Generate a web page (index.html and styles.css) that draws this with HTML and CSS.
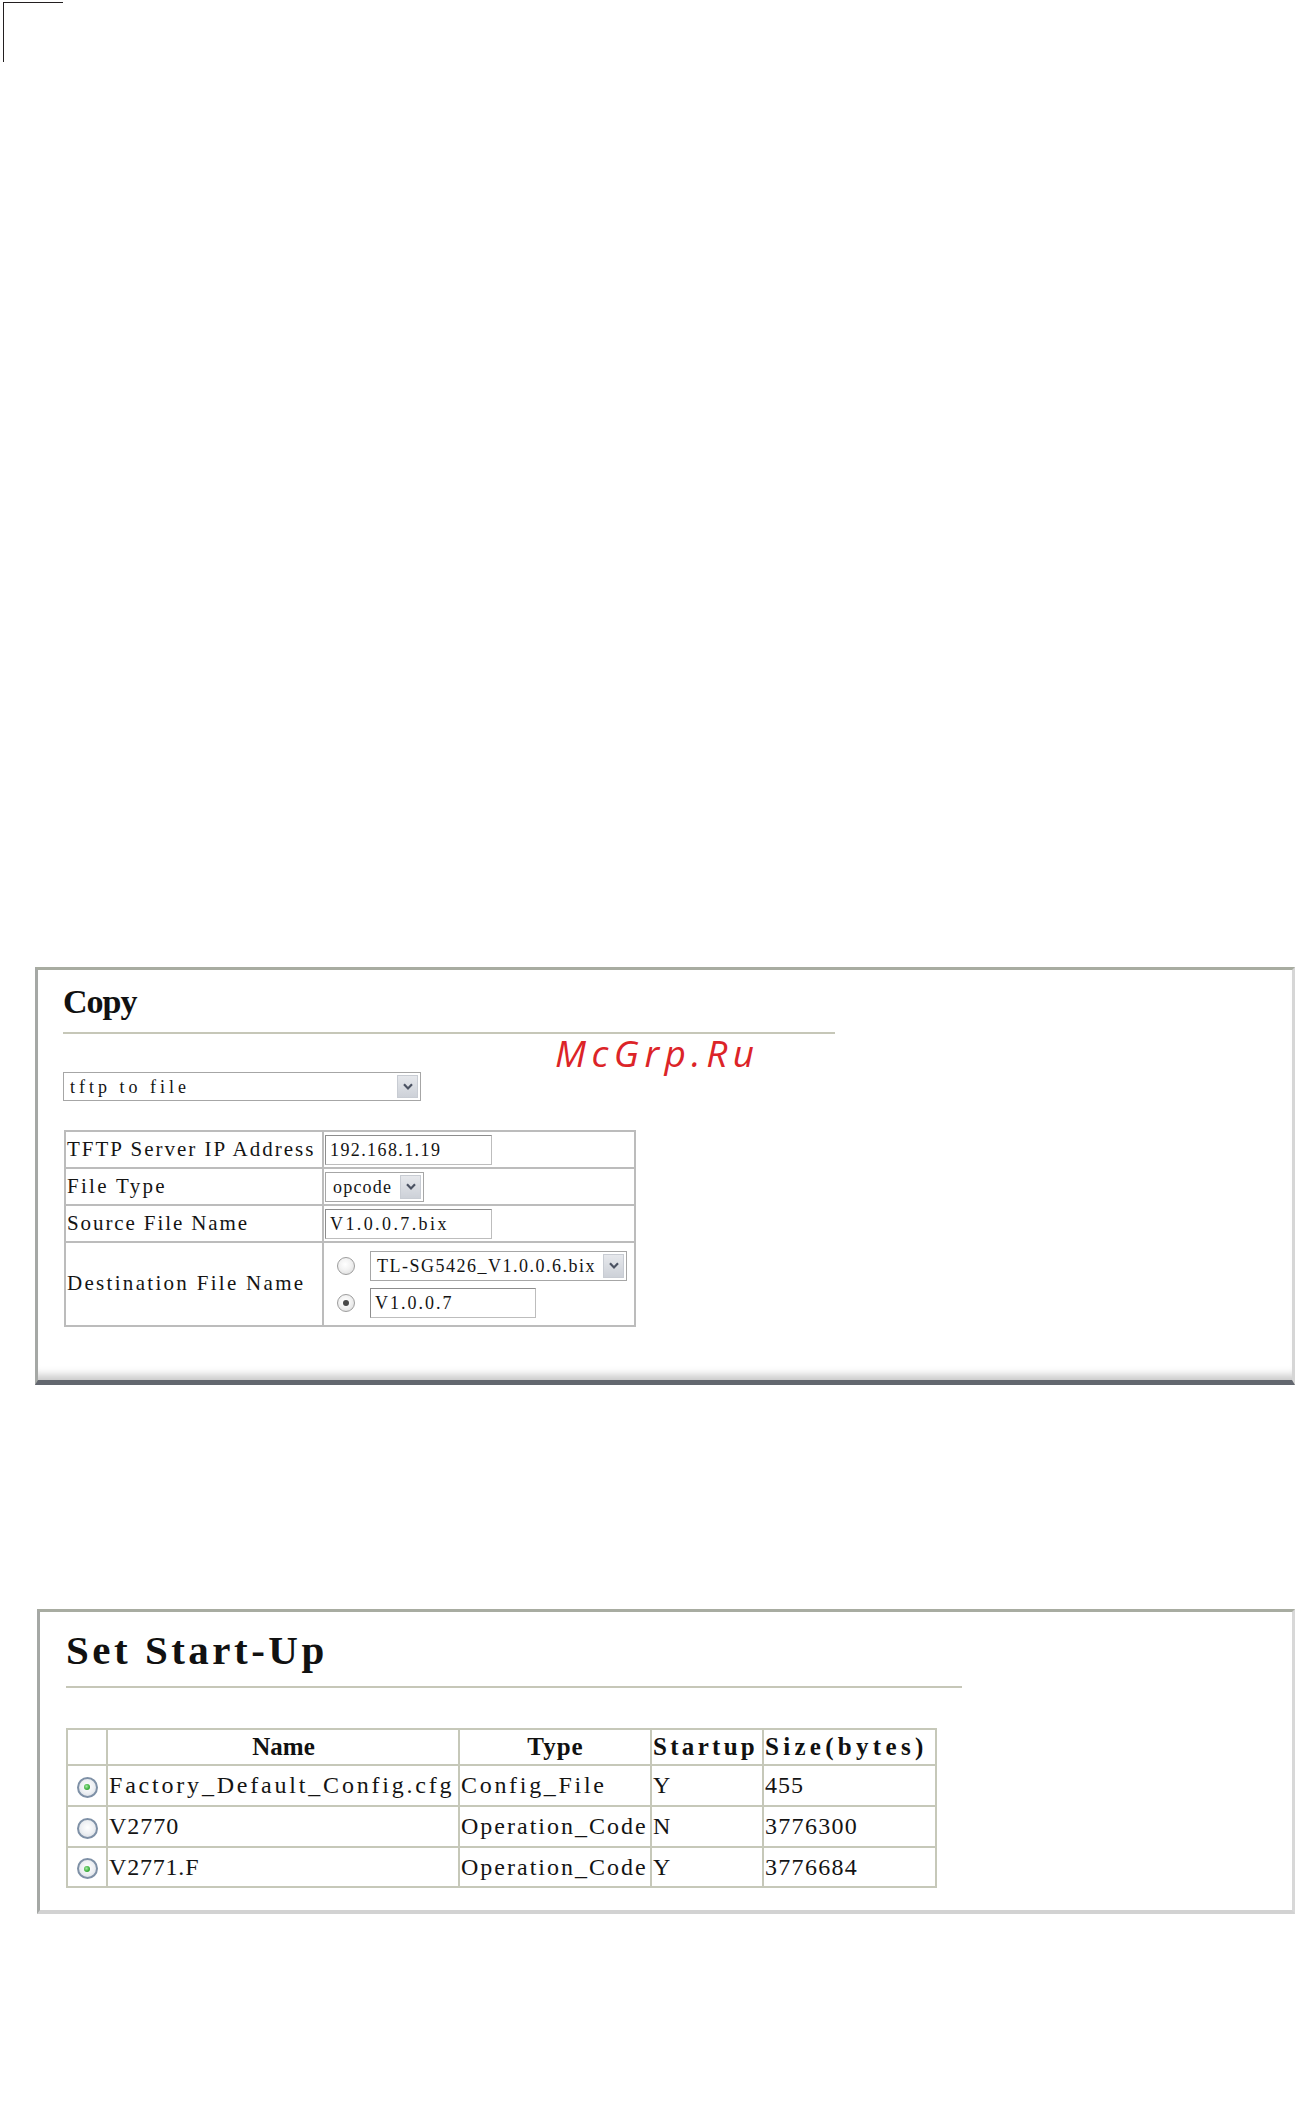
FILE: index.html
```html
<!DOCTYPE html>
<html>
<head>
<meta charset="utf-8">
<title>Copy / Set Start-Up</title>
<link rel="stylesheet" href="styles.css">
</head>
<body>
<div class="crop"></div>

<section class="panel panel-copy">
  <h1 class="title title-copy">Copy</h1>
  <div class="rule rule-copy"></div>
  <div class="wm">McGrp.Ru</div>
  <div class="sel sel-mode">
    <span class="sel-text ls40">tftp to file</span>
    <span class="sel-btn"><svg width="10" height="7" viewBox="0 0 10 7"><path d="M1 1.2 L5 5.4 L9 1.2" fill="none" stroke="#4b5262" stroke-width="2.2"/></svg></span>
  </div>
  <table class="form">
    <colgroup><col class="c-lab"><col class="c-val"></colgroup>
    <tr class="r1">
      <td class="lab ls21">TFTP Server IP Address</td>
      <td class="val"><div class="inp inp-w"><span class="ls14">192.168.1.19</span></div></td>
    </tr>
    <tr class="r1">
      <td class="lab ls23">File Type</td>
      <td class="val">
        <div class="sel sel-type">
          <span class="sel-text ls12">opcode</span>
          <span class="sel-btn"><svg width="10" height="7" viewBox="0 0 10 7"><path d="M1 1.2 L5 5.4 L9 1.2" fill="none" stroke="#4b5262" stroke-width="2.2"/></svg></span>
        </div>
      </td>
    </tr>
    <tr class="r1">
      <td class="lab ls19">Source File Name</td>
      <td class="val"><div class="inp inp-w"><span class="ls24">V1.0.0.7.bix</span></div></td>
    </tr>
    <tr class="r4">
      <td class="lab ls23">Destination File Name</td>
      <td class="val">
        <div class="dest">
          <div class="dest-row">
            <span class="rad"></span>
            <div class="sel sel-dest">
              <span class="sel-text ls15">TL-SG5426_V1.0.0.6.bix</span>
              <span class="sel-btn"><svg width="10" height="7" viewBox="0 0 10 7"><path d="M1 1.2 L5 5.4 L9 1.2" fill="none" stroke="#4b5262" stroke-width="2.2"/></svg></span>
            </div>
          </div>
          <div class="dest-row">
            <span class="rad on"></span>
            <div class="inp inp-dest"><span class="ls20">V1.0.0.7</span></div>
          </div>
        </div>
      </td>
    </tr>
  </table>
</section>

<section class="panel panel-start">
  <h1 class="title title-start">Set Start-Up</h1>
  <div class="rule rule-start"></div>
  <table class="grid">
    <colgroup>
      <col class="g1"><col class="g2"><col class="g3"><col class="g4"><col class="g5">
    </colgroup>
    <tr class="hd">
      <th></th>
      <th class="ctr ls0">Name</th>
      <th class="ctr ls10">Type</th>
      <th class="ls33">Startup</th>
      <th class="ls43">Size(bytes)</th>
    </tr>
    <tr class="dr">
      <td class="rc"><span class="rad2 on"></span></td>
      <td class="ls28">Factory_Default_Config.cfg</td>
      <td class="ls27">Config_File</td>
      <td>Y</td>
      <td class="ls10">455</td>
    </tr>
    <tr class="dr">
      <td class="rc"><span class="rad2"></span></td>
      <td class="ls10">V2770</td>
      <td class="ls20">Operation_Code</td>
      <td>N</td>
      <td class="ls13">3776300</td>
    </tr>
    <tr class="dr dr-last">
      <td class="rc"><span class="rad2 on"></span></td>
      <td class="ls08">V2771.F</td>
      <td class="ls20">Operation_Code</td>
      <td>Y</td>
      <td class="ls13">3776684</td>
    </tr>
  </table>
</section>
</body>
</html>
```

FILE: styles.css
```css
html, body {
  margin: 0;
  padding: 0;
  background: #ffffff;
}

body {
  font-family: "Liberation Serif", "Times New Roman", serif;
  color: #141414;
  width: 1297px;
}

/* crop mark at top-left */
.crop {
  box-sizing: border-box;
  width: 60px;
  height: 60px;
  margin: 2px 0 0 3px;
  border-top: 1px solid #231f20;
  border-left: 1px solid #231f20;
}

/* panels */
.panel {
  position: relative;
  box-sizing: border-box;
  background: #ffffff;
}

.panel-copy {
  margin: 905px 0 0 35px;
  width: 1260px;
  border-top: 3px solid #a8aca1;
  border-left: 3px solid #a5a8a5;
  border-right: 3px solid #d6d6d6;
  border-bottom: 5px solid #63676f;
  padding: 12px 0 53px 25px;
  box-shadow: inset 0 -12px 9px -7px #c9c9c9;
}

.panel-start {
  margin: 224px 0 0 37px;
  width: 1258px;
  border-top: 3px solid #a8aca1;
  border-left: 3px solid #a5a8a5;
  border-right: 3px solid #d8d8d8;
  border-bottom: 4px solid #d2d2d2;
  padding: 15px 0 22px 26px;
}

.title {
  margin: 0;
  font-weight: bold;
  color: #111;
}

.title-copy {
  font-size: 34px;
  line-height: 40px;
  letter-spacing: -1px;
}

.title-start {
  font-size: 41px;
  line-height: 46px;
  letter-spacing: 3.5px;
}

.rule {
  height: 2px;
  background: #c6c7b8;
}

.rule-copy {
  width: 772px;
  margin-top: 10px;
}

.rule-start {
  width: 896px;
  margin-top: 13px;
}

/* watermark */
.wm {
  position: absolute;
  left: 517px;
  top: 65px;
  font-family: "Open Sans", "Noto Sans", sans-serif;
  font-style: italic;
  font-size: 37px;
  line-height: 36px;
  letter-spacing: 5.5px;
  color: #dc2428;
}

/* select boxes */
.sel {
  box-sizing: border-box;
  display: flex;
  align-items: stretch;
  border: 1px solid #a6a6a6;
  padding: 2px;
  background: #fff;
  font-size: 18px;
  line-height: 22px;
}

.sel-text {
  flex: 1;
  padding-left: 4px;
  white-space: nowrap;
  display: flex;
  align-items: center;
}

.sel-btn {
  width: 21px;
  box-sizing: border-box;
  display: flex;
  align-items: center;
  justify-content: center;
  background: linear-gradient(#e6e8ec, #cdd1d8);
  border: 1px solid #c8ccd3;
}

.sel-mode {
  margin-top: 38px;
  width: 358px;
  height: 29px;
}

.sel-type {
  width: 99px;
  height: 30px;
}

.sel-type .sel-text {
  padding-left: 5px;
}

.sel-dest {
  width: 257px;
  height: 30px;
}

.sel-dest .sel-text {
  padding-left: 4px;
}

/* text inputs */
.inp {
  box-sizing: border-box;
  height: 30px;
  border: 1px solid #8d8d8d;
  border-right-color: #bdbdbd;
  border-bottom-color: #bdbdbd;
  background: #fff;
  font-size: 18px;
  line-height: 28px;
  padding-left: 4px;
  white-space: nowrap;
}

.inp-w {
  width: 167px;
}

.inp-dest {
  width: 166px;
}

/* copy form table */
.form {
  margin: 29px 0 0 1px;
  border-collapse: collapse;
  table-layout: fixed;
  width: 570px;
  border: 2px solid #b9b9b9;
}

.c-lab { width: 258px; }
.c-val { width: 312px; }

.form td {
  border: 2px solid #bcbcbc;
  padding: 0;
  vertical-align: middle;
}

.form .r1 { height: 37px; }
.form .r4 { height: 84px; }

.form .lab {
  font-size: 21px;
  line-height: 24px;
  padding: 0 0 2px 1px;
  white-space: nowrap;
}

.form .val {
  padding-left: 1px;
}

.dest {
  display: flex;
  flex-direction: column;
  gap: 7px;
  padding-left: 12px;
}

.dest-row {
  display: flex;
  align-items: center;
  gap: 15px;
}

/* small radios (copy form) */
.rad {
  position: relative;
  box-sizing: border-box;
  width: 18px;
  height: 18px;
  border-radius: 50%;
  border: 1px solid #9e9e9e;
  background: radial-gradient(circle at 45% 40%, #ffffff 0, #f2f2f2 45%, #d6d6d6 100%);
  flex: none;
}

.rad.on::after {
  content: "";
  position: absolute;
  left: 5px;
  top: 5px;
  width: 6px;
  height: 6px;
  border-radius: 50%;
  background: #474747;
}

/* start-up grid */
.grid {
  margin-top: 40px;
  border-collapse: collapse;
  table-layout: fixed;
  width: 869px;
  border: 2px solid #c3c5b6;
}

.g1 { width: 40px; }
.g2 { width: 352px; }
.g3 { width: 192px; }
.g4 { width: 112px; }
.g5 { width: 173px; }

.grid th,
.grid td {
  border: 2px solid #c6c8b9;
  padding: 0 0 0 1px;
  vertical-align: middle;
  white-space: nowrap;
  text-align: left;
  overflow: visible;
}

.grid th {
  font-weight: bold;
  font-size: 25px;
  line-height: 28px;
  color: #111;
}

.grid th.ctr {
  text-align: center;
}

.grid td {
  font-size: 24px;
  line-height: 28px;
  padding-bottom: 1px;
}

.grid .hd { height: 36px; }
.grid .dr { height: 41px; }
.grid .dr-last { height: 40px; }

.grid td.rc {
  text-align: center;
  padding: 0 0 1px 0;
}

.rad2 {
  position: relative;
  display: inline-block;
  vertical-align: middle;
  box-sizing: border-box;
  width: 21px;
  height: 21px;
  border-radius: 50%;
  border: 2px solid #7e90a6;
  background: radial-gradient(circle at 50% 45%, #ffffff 0, #eef0f3 50%, #d0d6de 100%);
}

.rad2.on::after {
  content: "";
  position: absolute;
  left: 5.5px;
  top: 5.5px;
  width: 6px;
  height: 6px;
  border-radius: 50%;
  background: radial-gradient(circle at 40% 40%, #a6eaa6 0, #3fb23f 55%, #268a26 100%);
}

/* letter-spacing helpers matching the wide half-width glyphs */
.ls0 { letter-spacing: 0; }
.ls08 { letter-spacing: 0.8px; }
.ls10 { letter-spacing: 1px; }
.ls12 { letter-spacing: 1.2px; }
.ls13 { letter-spacing: 1.3px; }
.ls14 { letter-spacing: 1.4px; }
.ls15 { letter-spacing: 1.5px; }
.ls19 { letter-spacing: 1.9px; }
.ls20 { letter-spacing: 2px; }
.ls21 { letter-spacing: 2px; }
.ls23 { letter-spacing: 2.3px; }
.ls24 { letter-spacing: 2.4px; }
.ls27 { letter-spacing: 2.7px; }
.ls28 { letter-spacing: 2.8px; }
.ls33 { letter-spacing: 3.3px; }
.ls40 { letter-spacing: 4px; }
.ls43 { letter-spacing: 4.3px; }
```
